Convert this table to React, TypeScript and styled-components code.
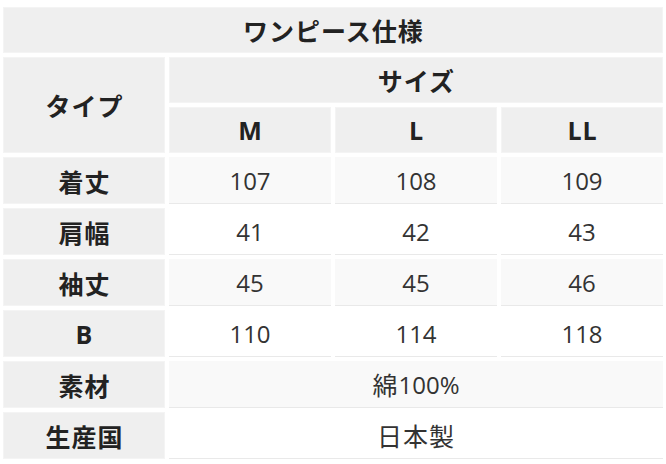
import React from "react";
import styled, { createGlobalStyle } from "styled-components";

const Global = createGlobalStyle`
  html, body { margin: 0; padding: 0; background: #ffffff; }
  body { font-family: "Open Sans", "Noto Sans CJK JP", sans-serif; }
`;

const Page = styled.div`
  padding: 7px 3px 5px 3px;
`;

const Grid = styled.div`
  display: grid;
  grid-template-columns: repeat(4, 162px);
  grid-template-rows: 46px 46px 46px repeat(6, 47px);
  gap: 4px;
`;

const HeadCell = styled.div<{ $colSpan?: number; $rowSpan?: number }>`
  grid-column: span ${(p) => p.$colSpan ?? 1};
  grid-row: span ${(p) => p.$rowSpan ?? 1};
  background: #efefef;
  box-shadow: inset 0 0 0 1px #f4f4f4;
  display: flex;
  align-items: center;
  justify-content: center;
  font-family: "Open Sans", "Noto Sans CJK JP", sans-serif;
  font-weight: 700;
  font-size: 25px;
  color: #222;
  letter-spacing: 1px;
  padding-left: 1px;
`;

const DataCell = styled.div<{ $colSpan?: number; $odd: boolean }>`
  grid-column: span ${(p) => p.$colSpan ?? 1};
  background: ${(p) => (p.$odd ? "#f9f9f9" : "#ffffff")};
  border-bottom: 1px solid #e9e9e9;
  display: flex;
  align-items: center;
  justify-content: center;
  font-family: "Open Sans", "Noto Sans CJK JP", sans-serif;
  font-weight: 400;
  font-size: 24px;
  color: #333;
`;

const Jp = styled.span`
  font-family: "Noto Sans CJK JP", sans-serif;
  font-size: 25px;
  letter-spacing: 1px;
`;

const renderText = (text: string) =>
  text.split(/([\u3000-\u9fff]+)/).filter(Boolean).map((part, i) =>
    /[\u3000-\u9fff]/.test(part) ? <Jp key={i}>{part}</Jp> : <span key={i}>{part}</span>
  );

const rows: { label: string; values: string[] }[] = [
  { label: "着丈", values: ["107", "108", "109"] },
  { label: "肩幅", values: ["41", "42", "43"] },
  { label: "袖丈", values: ["45", "45", "46"] },
  { label: "B", values: ["110", "114", "118"] },
  { label: "素材", values: ["綿100%"] },
  { label: "生産国", values: ["日本製"] },
];

export default function App() {
  return (
    <>
      <Global />
      <Page>
        <Grid>
          <HeadCell $colSpan={4}>ワンピース仕様</HeadCell>
          <HeadCell $rowSpan={2}>タイプ</HeadCell>
          <HeadCell $colSpan={3}>サイズ</HeadCell>
          <HeadCell>M</HeadCell>
          <HeadCell>L</HeadCell>
          <HeadCell>LL</HeadCell>
          {rows.map((r, i) => (
            <React.Fragment key={r.label}>
              <HeadCell>{r.label}</HeadCell>
              {r.values.map((v, j) => (
                <DataCell
                  key={j}
                  $odd={i % 2 === 0}
                  $colSpan={r.values.length === 1 ? 3 : 1}
                >
                  {renderText(v)}
                </DataCell>
              ))}
            </React.Fragment>
          ))}
        </Grid>
      </Page>
    </>
  );
}
